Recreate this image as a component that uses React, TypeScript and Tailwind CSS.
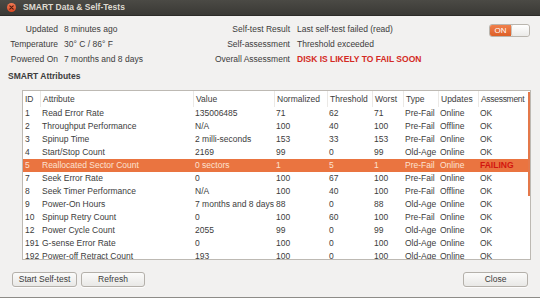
import React from 'react';

type Row = [string, string, string, string, string, string, string, string, string];

const rows: Row[] = [
  ['1', 'Read Error Rate', '135006485', '71', '62', '71', 'Pre-Fail', 'Online', 'OK'],
  ['2', 'Throughput Performance', 'N/A', '100', '40', '100', 'Pre-Fail', 'Offline', 'OK'],
  ['3', 'Spinup Time', '2 milli-seconds', '153', '33', '153', 'Pre-Fail', 'Online', 'OK'],
  ['4', 'Start/Stop Count', '2169', '99', '0', '99', 'Old-Age', 'Online', 'OK'],
  ['5', 'Reallocated Sector Count', '0 sectors', '1', '5', '1', 'Pre-Fail', 'Online', 'FAILING'],
  ['7', 'Seek Error Rate', '0', '100', '67', '100', 'Pre-Fail', 'Online', 'OK'],
  ['8', 'Seek Timer Performance', 'N/A', '100', '40', '100', 'Pre-Fail', 'Offline', 'OK'],
  ['9', 'Power-On Hours', '7 months and 8 days', '88', '0', '88', 'Old-Age', 'Online', 'OK'],
  ['10', 'Spinup Retry Count', '0', '100', '60', '100', 'Pre-Fail', 'Online', 'OK'],
  ['12', 'Power Cycle Count', '2055', '99', '0', '99', 'Old-Age', 'Online', 'OK'],
  ['191', 'G-sense Error Rate', '0', '100', '0', '100', 'Old-Age', 'Online', 'OK'],
  ['192', 'Power-off Retract Count', '193', '100', '0', '100', 'Old-Age', 'Online', 'OK'],
];

const headers = ['ID', 'Attribute', 'Value', 'Normalized', 'Threshold', 'Worst', 'Type', 'Updates', 'Assessment'];

const cols = 'grid grid-cols-[17px_153px_81px_53px_45px_31px_35px_40px_1fr]';

function Button({ label, width }: { label: string; width: string }) {
  return (
    <button
      className={`${width} h-[15px] rounded-[3px] border border-[#b4b0aa] bg-gradient-to-b from-[#fbfbfa] to-[#e9e8e6] text-[8.5px] leading-none text-[#3c3c3c] shadow-[0_1px_0_rgba(255,255,255,0.8)]`}
    >
      {label}
    </button>
  );
}

export default function App() {
  return (
    <div
      className="w-[540px] h-[298px] flex flex-col bg-[#f2f1f0] border-b border-[#8e8c88] text-[8.5px] text-[#3c3c3c] overflow-hidden"
      style={{ fontFamily: '"Liberation Sans", Arial, sans-serif' }}
    >
      {/* Title bar */}
      <div className="h-[16px] shrink-0 flex items-center bg-gradient-to-b from-[#4b4a45] to-[#3a3935] border-b border-[#2c2b28]">
        <div className="ml-[7px] w-[9px] h-[9px] rounded-full bg-gradient-to-b from-[#f27b55] to-[#d9461f] flex items-center justify-center">
          <svg width="5" height="5" viewBox="0 0 5 5">
            <path d="M0.8 0.8L4.2 4.2M4.2 0.8L0.8 4.2" stroke="#4a1d10" strokeWidth="1.1" strokeLinecap="round" />
          </svg>
        </div>
        <span className="ml-[7px] font-bold text-[#dfdbd2]">SMART Data &amp; Self-Tests</span>
      </div>

      {/* Summary */}
      <div className="flex pt-[6px]">
        <div className="w-[200px] grid grid-cols-[58px_auto] gap-x-[6px] auto-rows-[15px] items-center">
          <span className="text-right">Updated</span>
          <span>8 minutes ago</span>
          <span className="text-right">Temperature</span>
          <span>30° C / 86° F</span>
          <span className="text-right">Powered On</span>
          <span>7 months and 8 days</span>
        </div>
        <div className="grid grid-cols-[90px_auto] gap-x-[7px] auto-rows-[15px] items-center">
          <span className="text-right">Self-test Result</span>
          <span>Last self-test failed (read)</span>
          <span className="text-right">Self-assessment</span>
          <span>Threshold exceeded</span>
          <span className="text-right">Overall Assessment</span>
          <span className="font-bold text-[#d42a24]">DISK IS LIKELY TO FAIL SOON</span>
        </div>
        <div className="ml-auto mr-[10px] mt-[2px] w-[41px] h-[13px] flex rounded-[3px] border border-[#b9b5ae] overflow-hidden">
          <div className="w-[21px] bg-gradient-to-b from-[#f0804c] to-[#dd5f26] text-white flex items-center justify-center text-[8px]">
            ON
          </div>
          <div className="flex-1 bg-gradient-to-b from-white to-[#ebeae8] rounded-[2px] border-l border-[#c8c4bd]" />
        </div>
      </div>

      <div className="pl-[8px] mt-[3px] h-[12px] flex items-center font-bold">SMART Attributes</div>

      {/* Table */}
      <div className="relative ml-[22px] mt-[8px] w-[509px] h-[170px] shrink-0 bg-white border border-[#bdb9b3] overflow-hidden">
        <div className={`${cols} h-[16px] items-center`}>
          {headers.map((h, i) => (
            <div
              key={h}
              className={`h-full flex items-center pl-[2px] whitespace-nowrap ${i > 0 ? 'border-l border-[#ebe9e6]' : ''} ${
                i === 8 ? 'tracking-[-0.3px]' : ''
              }`}
            >
              {h}
            </div>
          ))}
        </div>
        {rows.map((r) => {
          const sel = r[8] === 'FAILING';
          return (
            <div
              key={r[0]}
              className={`${cols} h-[13px] items-center ${sel ? 'bg-[#ea7440] text-[#fde2d2]' : ''}`}
            >
              {r.map((c, i) => (
                <div
                  key={i}
                  className={`pl-[2px] whitespace-nowrap ${i < 8 ? 'overflow-hidden' : ''} ${
                    i === 8 && sel ? 'font-bold text-[#d2160f]' : ''
                  }`}
                >
                  {c}
                </div>
              ))}
            </div>
          );
        })}
        <div className="absolute right-0 top-[1px] w-[2px] h-[104px] bg-[#e4784a]" />
      </div>

      {/* Buttons */}
      <div className="mt-[12px] px-[12px] flex items-center gap-[4px]">
        <Button label="Start Self-test" width="w-[65px]" />
        <Button label="Refresh" width="w-[64px]" />
        <div className="ml-auto">
          <Button label="Close" width="w-[65px]" />
        </div>
      </div>
    </div>
  );
}
